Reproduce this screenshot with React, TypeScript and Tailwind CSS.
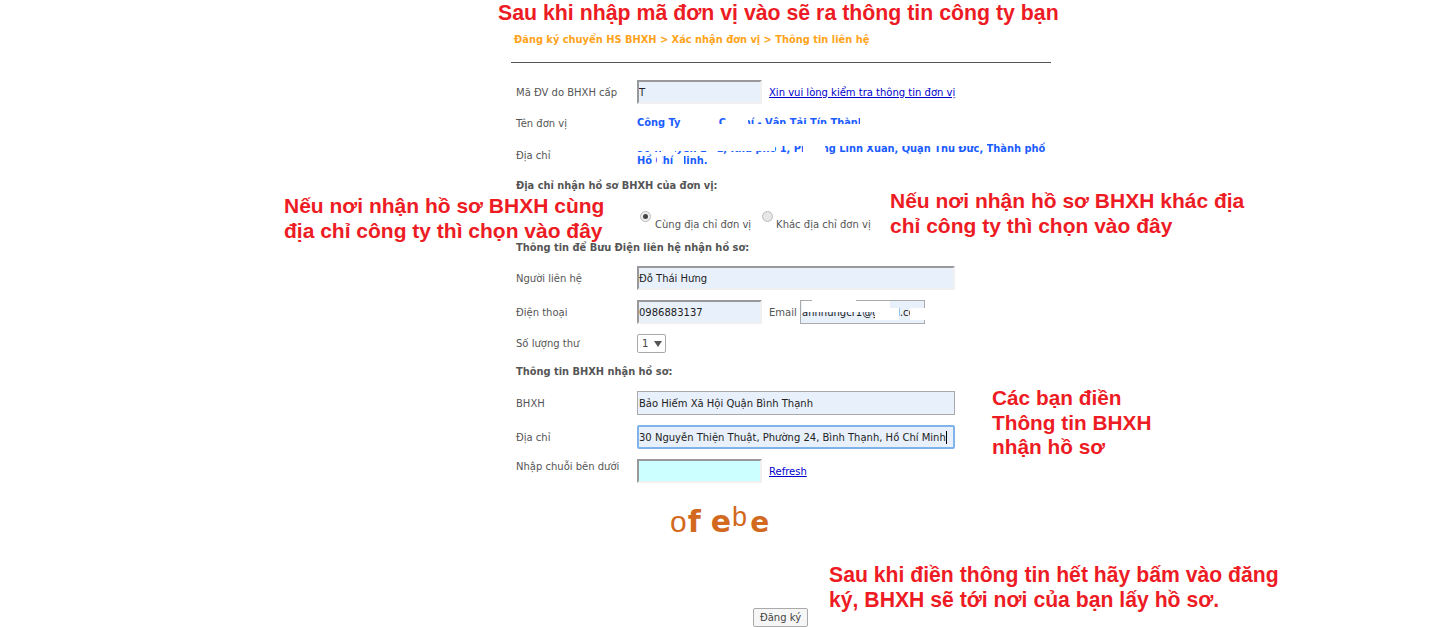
import { ReactNode } from 'react';

const FIELD = 'bg-[#e8f0fb] text-[10px] text-[#222] outline-none font-["DejaVu_Sans",sans-serif]';
const INSET = 'border-2 border-t-[#999] border-l-[#999] border-r-[#f0f0f0] border-b-[#f0f0f0]';

function Row({ label, className, children }: { label: string; className: string; children?: ReactNode }) {
    return (
        <div className={`flex items-center pl-[5px] ${className}`}>
            <div className="w-[121px] shrink-0 text-[#555]">{label}</div>
            {children}
        </div>
    );
}

function Heading({ children, className }: { children: ReactNode; className: string }) {
    return <div className={`pl-[5px] text-[9.85px] font-bold text-[#555] ${className}`}>{children}</div>;
}

function Note({ className, children }: { className: string; children: ReactNode }) {
    return (
        <div className={`absolute font-bold leading-[24.5px] text-[#ed1c24] whitespace-nowrap font-["Liberation_Sans",Arial,sans-serif] ${className}`}>
            {children}
        </div>
    );
}

// white patches painted over the private data in the reference
function Mask({ className }: { className: string }) {
    return <div className={`absolute bg-white ${className}`} />;
}

export default function App() {
    return (
        <div className='relative h-[627px] w-[1429px] overflow-hidden bg-white font-["DejaVu_Sans",Verdana,sans-serif] text-[10px]'>
            <div className="ml-[511px] flex w-[540px] flex-col">
                <div className="h-[34px]" />
                <div className="h-[12px] pl-[3px] text-[9.85px] font-bold leading-[12px] text-[#ffa31a]">
                    Đăng ký chuyển HS BHXH &gt; Xác nhận đơn vị &gt; Thông tin liên hệ
                </div>
                <div className="mt-[16px] h-px bg-[#555]" />

                <Row label="Mã ĐV do BHXH cấp" className="mt-[17px] h-[24px]">
                    <input readOnly defaultValue="T" className={`h-[24px] w-[125px] ${INSET} ${FIELD}`} />
                    <a href="#" className="ml-[7px] text-[#00c] underline">Xin vui lòng kiểm tra thông tin đơn vị</a>
                </Row>

                <Row label="Tên đơn vị" className="relative mt-[8px] h-[22px]">
                    <div className="whitespace-nowrap text-[9.85px] font-bold text-[#1a5cff]">Công Ty TNHH Cơ Khí - Vận Tải Tín Thành</div>
                    <Mask className="left-[172px] top-0 h-[13px] w-[34px]" />
                    <Mask className="left-[215px] top-0 h-[22px] w-[22px]" />
                    <Mask className="left-[172px] top-[12px] h-[10px] w-[180px]" />
                    <Mask className="left-[349px] top-0 h-[22px] w-[100px]" />
                </Row>

                <Row label="Địa chỉ" className="relative mt-[6px] h-[30px]">
                    <div className="whitespace-nowrap text-[9.85px] font-bold leading-[12px] text-[#1a5cff]">
                        90 Nguyễn Lộ 1, Khu phố 1, Phường Linh Xuân, Quận Thủ Đức, Thành phố
                        <br />
                        Hồ Chí Minh.
                    </div>
                    <Mask className="left-[122px] top-0 h-[11px] w-[142px]" />
                    <Mask className="left-[150px] top-0 h-[15px] w-[14px]" />
                    <Mask className="left-[196px] top-0 h-[15px] w-[10px]" />
                    <Mask className="left-[292px] top-0 h-[14px] w-[22px]" />
                    <Mask className="left-[264px] top-0 h-[6px] w-[212px]" />
                    <Mask className="left-[146px] top-[15px] h-[12px] w-[5px]" />
                    <Mask className="left-[163px] top-[15px] h-[12px] w-[10px]" />
                </Row>

                <Heading className="mt-[9px] h-[14px] leading-[14px]">Địa chỉ nhận hồ sơ BHXH của đơn vị:</Heading>

                <div className="mt-[15px] flex h-[26px] pl-[129px] text-[#555]">
                    <div className="flex">
                        <span className="mt-[3px] flex h-[11px] w-[11px] items-center justify-center rounded-full border border-[#bbb] bg-[#eee]">
                            <span className="h-[5px] w-[5px] rounded-full bg-[#444]" />
                        </span>
                        <span className="ml-[4px] mt-[9px]">Cùng địa chỉ đơn vị</span>
                    </div>
                    <div className="ml-[11px] flex">
                        <span className="mt-[3px] h-[11px] w-[11px] rounded-full border border-[#bbb] bg-[#e6e6e6]" />
                        <span className="ml-[3px] mt-[9px]">Khác địa chỉ đơn vị</span>
                    </div>
                </div>

                <Heading className="mt-[7px] h-[14px] leading-[14px]">Thông tin để Bưu Điện liên hệ nhận hồ sơ:</Heading>

                <Row label="Người liên hệ" className="mt-[11px] h-[24px]">
                    <input readOnly defaultValue="Đỗ Thái Hưng" className={`h-[24px] w-[318px] ${INSET} ${FIELD}`} />
                </Row>

                <Row label="Điện thoại" className="relative mt-[10px] h-[24px]">
                    <input readOnly defaultValue="0986883137" className={`h-[24px] w-[125px] ${INSET} ${FIELD}`} />
                    <span className="ml-[7px] w-[31px] text-[#555]">Email</span>
                    <input readOnly defaultValue="anhhungcr1@gmail.com" className={`h-[24px] w-[125px] border border-[#aaa] px-[1px] ${FIELD}`} />
                    <Mask className="left-[291px] top-[1px] h-[11px] w-[88px]" />
                    <Mask className="left-[301px] top-0 h-[2px] w-[44px]" />
                    <Mask className="left-[364px] top-[8px] h-[12px] w-[24px]" />
                    <Mask className="left-[399px] top-[8px] h-[12px] w-[16px]" />
                </Row>

                <Row label="Số lượng thư" className="mt-[10px] h-[19px]">
                    <div className="flex h-[19px] w-[29px] items-center rounded-[2px] border border-[#aaa] pl-[4px] text-[#444]">
                        <span>1</span>
                        <svg viewBox="0 0 8 6" className="ml-[6px] h-[6px] w-[8px]"><path d="M0 0h8L4 6z" fill="#555" /></svg>
                    </div>
                </Row>

                <Heading className="mt-[12px] h-[14px] leading-[14px]">Thông tin BHXH nhận hồ sơ:</Heading>

                <Row label="BHXH" className="mt-[12px] h-[24px]">
                    <input readOnly defaultValue="Bảo Hiểm Xã Hội Quận Bình Thạnh" className={`h-[24px] w-[318px] border border-[#aaa] px-[1px] ${FIELD}`} />
                </Row>

                <Row label="Địa chỉ" className="relative mt-[10px] h-[24px]">
                    <input
                        readOnly
                        defaultValue="30 Nguyễn Thiện Thuật, Phường 24, Bình Thạnh, Hồ Chí Minh"
                        className={`h-[24px] w-[318px] rounded-[2px] border-2 border-[#7eb4ea] ${FIELD}`}
                    />
                    <div className="absolute left-[435px] top-[6px] h-[13px] w-px bg-black" />
                </Row>

                <div className="mt-[10px] flex h-[24px] pl-[5px]">
                    <div className="w-[121px] shrink-0 text-[#555]">Nhập chuỗi bên dưới</div>
                    <input readOnly className={`h-[24px] w-[125px] ${INSET} bg-[#ccffff] outline-none`} />
                    <a href="#" className="ml-[7px] mt-[5px] text-[#00c] underline">Refresh</a>
                </div>

                <div className='mt-[22px] flex h-[34px] items-baseline pl-[159px] text-[#d2691e] leading-[34px]'>
                    <span className='font-["Liberation_Sans",sans-serif] text-[30px]'>o</span>
                    <span className='ml-[1px] font-["DejaVu_Sans",sans-serif] text-[30px] font-bold'>f</span>
                    <span className='ml-[10px] font-["DejaVu_Sans",sans-serif] text-[30px] font-bold'>e</span>
                    <span className='ml-[1px] -translate-y-[6px] font-["Liberation_Sans",sans-serif] text-[27px]'>b</span>
                    <span className='ml-[3px] font-["DejaVu_Sans",sans-serif] text-[28px] font-bold'>e</span>
                </div>

                <div className="mt-[69px] flex justify-center">
                    <button className="mr-[1px] h-[19px] w-[55px] rounded-[2px] border border-[#aaa] bg-[#f6f6f6] text-[10px] text-[#444]">Đăng ký</button>
                </div>
            </div>

            <Note className="left-[498px] top-[1px] text-[21.3px]">Sau khi nhập mã đơn vị vào sẽ ra thông tin công ty bạn</Note>
            <Note className="left-[284px] top-[194px] text-[21px]">Nếu nơi nhận hồ sơ BHXH cùng<br />địa chỉ công ty thì chọn vào đây</Note>
            <Note className="left-[890px] top-[189px] text-[21px]">Nếu nơi nhận hồ sơ BHXH khác địa<br />chỉ công ty thì chọn vào đây</Note>
            <Note className="left-[992px] top-[386px] text-[20.8px]">Các bạn điền<br />Thông tin BHXH<br />nhận hồ sơ</Note>
            <Note className="left-[829px] top-[563px] text-[21.2px]">Sau khi điền thông tin hết hãy bấm vào đăng<br />ký, BHXH sẽ tới nơi của bạn lấy hồ sơ.</Note>
        </div>
    );
}
